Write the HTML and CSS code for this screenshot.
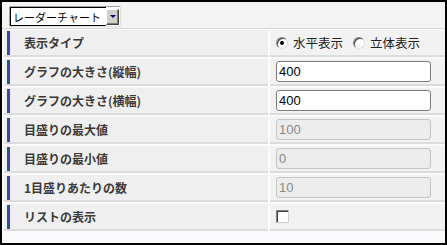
FILE: index.html
```html
<!DOCTYPE html>
<html lang="ja">
<head>
    <meta charset="UTF-8">
    <title>グラフ設定</title>
    <link rel="stylesheet" href="styles.css">
</head>
<body>

<div class="frame">
    <div class="toolbar">
        <div class="combo">
            <select class="combo-select">
                <option>レーダーチャート</option>
                <option>折れ線グラフ</option>
                <option>棒グラフ</option>
            </select>
            <span class="combo-btn"><span class="combo-arrow"></span></span>
        </div>
    </div>

    <div class="row">
        <div class="label"><span>表示タイプ</span></div>
        <div class="value">
            <label class="opt"><input type="radio" name="type" checked>水平表示</label>
            <label class="opt"><input type="radio" name="type">立体表示</label>
        </div>
    </div>
    <div class="row">
        <div class="label"><span>グラフの大きさ(縦幅)</span></div>
        <div class="value"><input class="field" type="text" value="400"></div>
    </div>
    <div class="row">
        <div class="label"><span>グラフの大きさ(横幅)</span></div>
        <div class="value"><input class="field" type="text" value="400"></div>
    </div>
    <div class="row">
        <div class="label"><span>目盛りの最大値</span></div>
        <div class="value"><input class="field" type="text" value="100" disabled></div>
    </div>
    <div class="row">
        <div class="label"><span>目盛りの最小値</span></div>
        <div class="value"><input class="field" type="text" value="0" disabled></div>
    </div>
    <div class="row">
        <div class="label"><span>1目盛りあたりの数</span></div>
        <div class="value"><input class="field" type="text" value="10" disabled></div>
    </div>
    <div class="row">
        <div class="label"><span>リストの表示</span></div>
        <div class="value"><input class="check" type="checkbox"></div>
    </div>
</div>

</body>
</html>
```

FILE: styles.css
```css
html, body {
    margin: 0;
    padding: 0;
}
body {
    font-family: "Noto Sans CJK JP", "Liberation Sans", sans-serif;
    font-size: 12px;
    color: #333;
}
.frame {
    width: 447px;
    height: 245px;
    box-sizing: border-box;
    border: 2px solid #000;
    background-color: #fafafd;
}
.toolbar {
    height: 27px;
    background-color: #f3f3f3;
    border-bottom: 1px solid #d8d8d8;
    margin-bottom: 1px;
    padding: 4px 0 0 7px;
    box-sizing: border-box;
}
.combo {
    display: inline-flex;
    align-items: center;
    width: 112px;
    height: 21px;
    box-sizing: border-box;
    border: 1px solid #a0a0a0;
    border-right-color: #e0e0e0;
    border-bottom-color: #e0e0e0;
    border-radius: 2px;
    background-color: #fff;
}
.combo-select {
    -webkit-appearance: none;
    appearance: none;
    flex: 1;
    min-width: 0;
    border: 1px solid #000;
    border-right: none;
    height: 19px;
    padding: 0 0 0 2px;
    margin: 0;
    font-family: "Noto Sans CJK JP", sans-serif;
    font-size: 11px;
    color: #000;
    background-color: #fff;
    outline: none;
}
.combo-btn {
    display: flex;
    align-items: center;
    justify-content: center;
    width: 11px;
    height: 14px;
    margin: 0 1px 0 0;
    background-color: #d4d0c8;
    border: 1px solid;
    border-color: #fff #404040 #404040 #fff;
    box-shadow: inset -1px -1px 0 #808080;
}
.combo-arrow {
    width: 0;
    height: 0;
    border-left: 3px solid transparent;
    border-right: 3px solid transparent;
    border-top: 3px solid #000080;
}
.row {
    display: flex;
    height: 27px;
    margin-bottom: 2px;
}
.label {
    width: 264px;
    margin-left: 2px;
    box-sizing: border-box;
    background-color: #efefef;
    border-bottom: 2px solid #dcdcdc;
    padding: 1px 0 0 3px;
}
.label span {
    display: block;
    height: 24px;
    line-height: 24px;
    border-left: 3px solid #2f4d9c;
    padding-left: 14px;
    font-weight: bold;
    color: #3a3a3a;
}
.value {
    flex: 1;
    margin-left: 2px;
    box-sizing: border-box;
    background-color: #f2f2f2;
    border-bottom: 2px solid #dcdcdc;
    display: flex;
    align-items: center;
    padding-left: 6px;
}
.opt {
    display: inline-flex;
    align-items: center;
    margin-right: 10px;
    font-size: 12.5px;
    color: #222;
}
.opt input {
    -webkit-appearance: none;
    appearance: none;
    width: 12px;
    height: 12px;
    margin: 0 5px 0 0;
    border-radius: 50%;
    border: 1px solid;
    border-color: #808080 #e0e0e0 #e0e0e0 #808080;
    background-color: #fff;
    box-shadow: inset 1px 1px 0 #404040;
    display: flex;
    align-items: center;
    justify-content: center;
}
.opt input:checked::after {
    content: "";
    width: 4px;
    height: 4px;
    border-radius: 50%;
    background-color: #000;
}
.field {
    width: 155px;
    height: 21px;
    box-sizing: border-box;
    border: 1px solid #7a7a7a;
    border-radius: 3px;
    padding: 0 2px;
    margin: 0;
    font-family: "Liberation Sans", Arial, sans-serif;
    font-size: 13px;
    color: #000;
    background-color: #fff;
}
.field:disabled {
    border-color: #c6c6c6;
    background-color: #ececec;
    color: #8a8a8a;
}
.check {
    -webkit-appearance: none;
    appearance: none;
    width: 13px;
    height: 13px;
    margin: 0;
    border: 1px solid;
    border-color: #808080 #d4d0c8 #d4d0c8 #808080;
    box-shadow: inset 1px 1px 0 #404040;
    background-color: #fff;
}
```
